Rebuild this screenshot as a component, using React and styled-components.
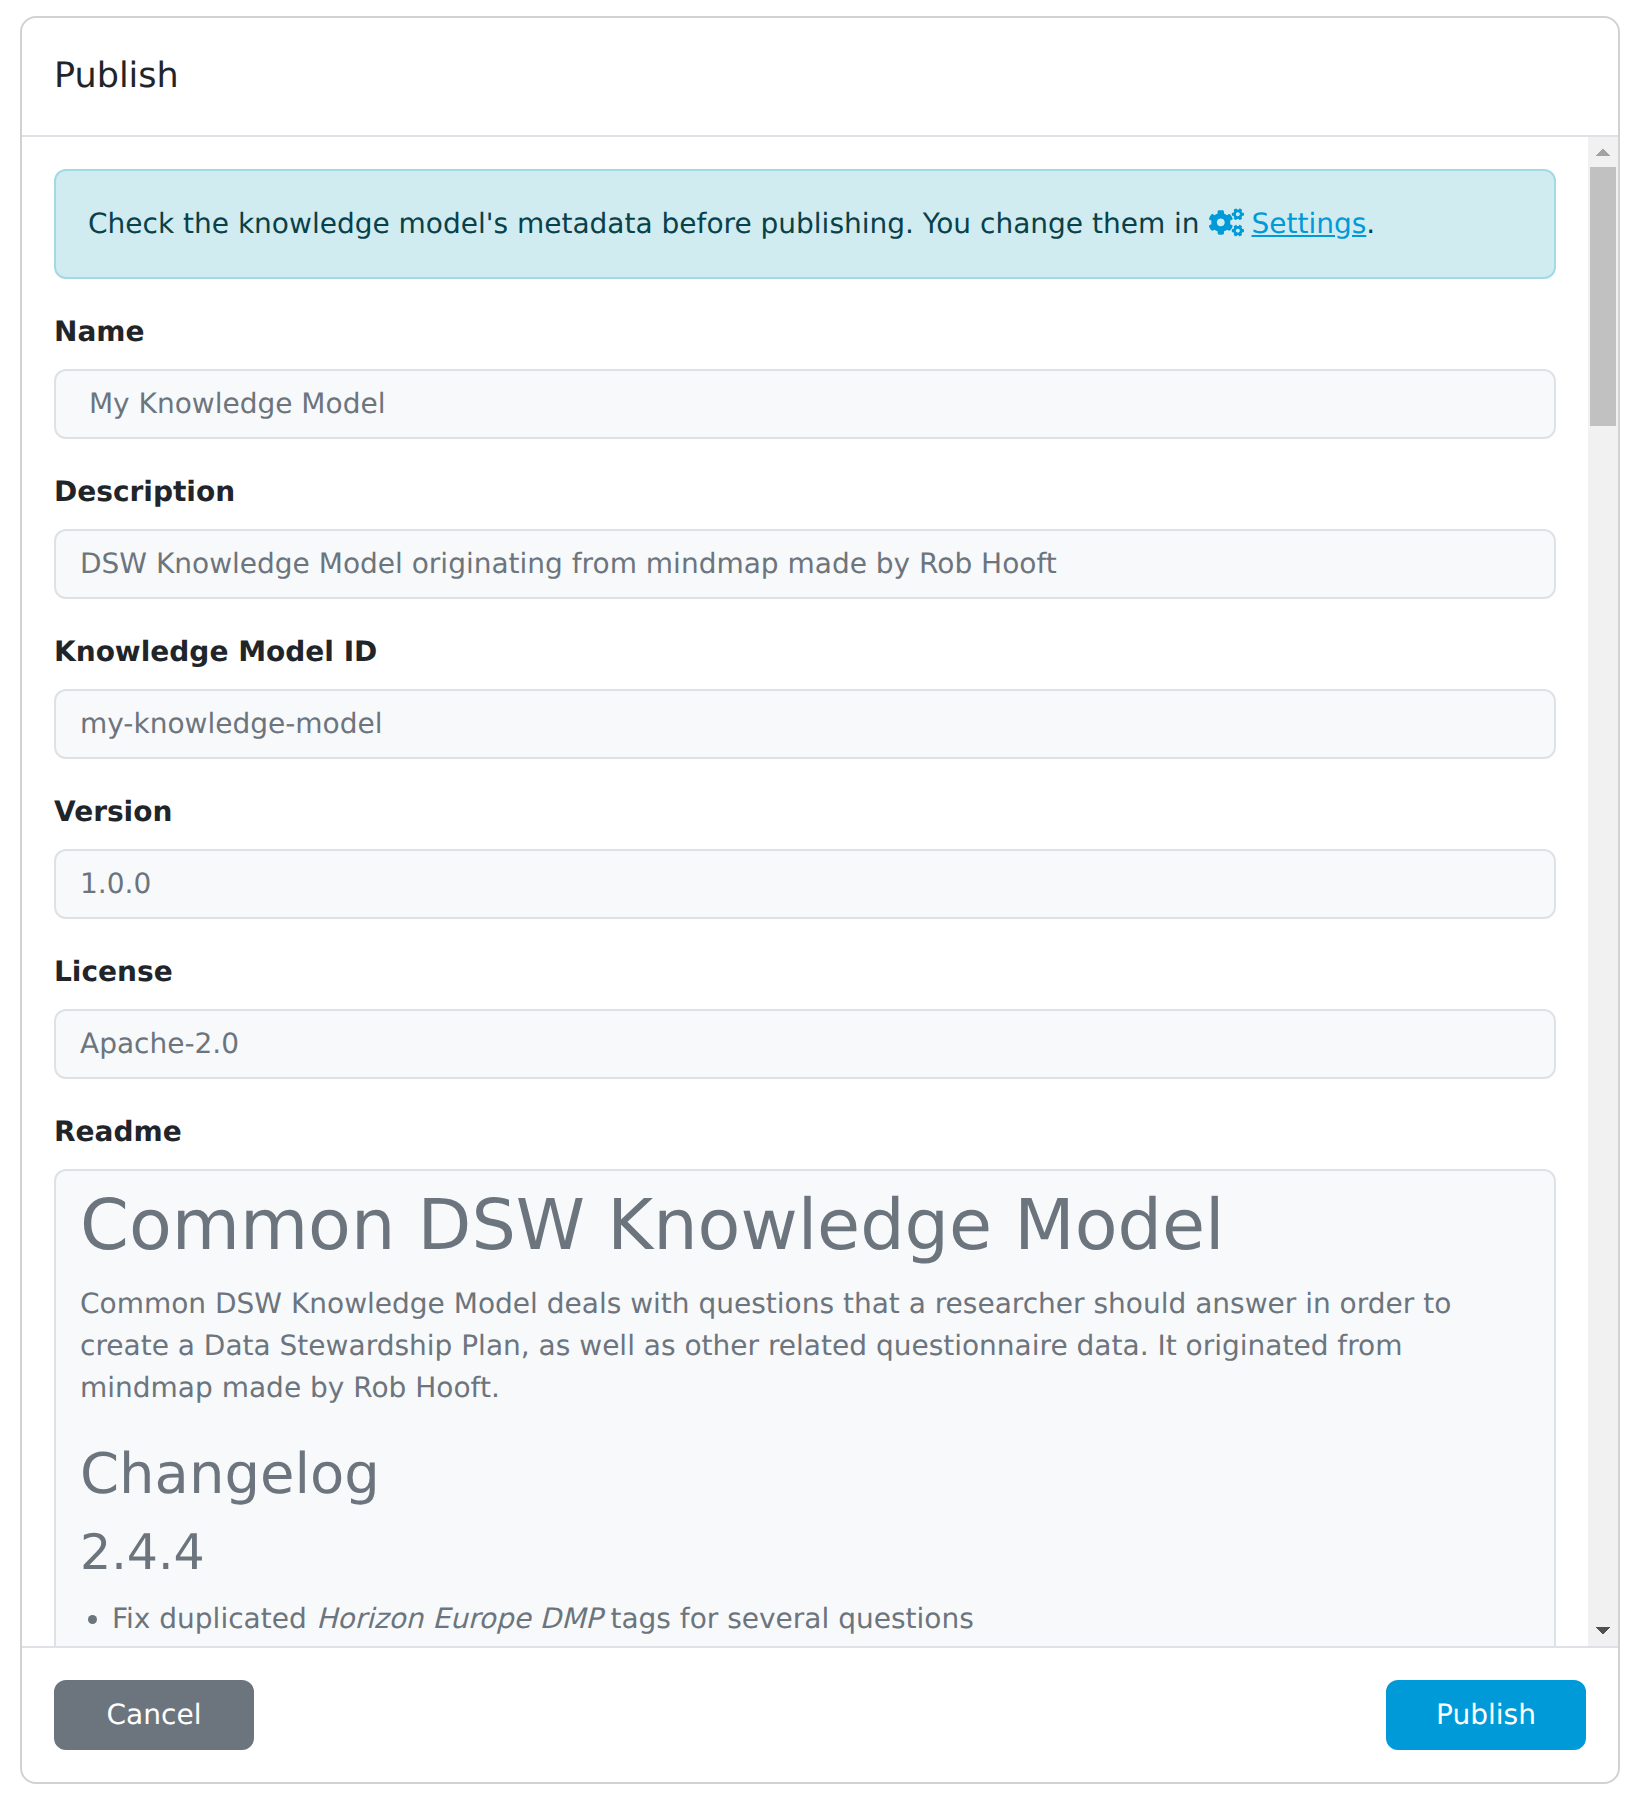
import React from 'react';
import styled, { createGlobalStyle } from 'styled-components';
import { FaCogs } from 'react-icons/fa';

const GlobalStyle = createGlobalStyle`
  *, *::before, *::after { box-sizing: border-box; }
  body {
    margin: 0;
    background: #fff;
    color: #212529;
    font-family: 'DejaVu Sans', sans-serif;
    font-size: 28px;
    line-height: 1.5;
    text-rendering: geometricPrecision;
  }
  h1, h2, h3, h5, p, ul { margin: 0; font-weight: 400; }
`;

const Page = styled.main`
  display: flex;
  height: 1808px;
  padding: 16px 20px 24px;
`;

const Dialog = styled.section`
  display: flex;
  flex: 1;
  flex-direction: column;
  min-width: 0;
  overflow: hidden;
  border: 2px solid #d2d2d2;
  border-radius: 16px;
  background: #fff;
`;

const DialogHeader = styled.header`
  flex: none;
  padding: 32px;
  border-bottom: 2px solid #dee2e6;
`;

const DialogTitle = styled.h5`
  font-size: 35px;
  line-height: 1.5;
`;

const DialogMain = styled.div`
  display: flex;
  flex: 1;
  min-height: 0;
`;

const DialogBody = styled.div`
  flex: 1;
  min-width: 0;
  overflow: hidden;
  padding: 32px;
`;

const Scrollbar = styled.div`
  display: flex;
  flex: none;
  flex-direction: column;
  width: 30px;
  background: #f1f1f1;
`;

const ScrollButton = styled.div`
  display: flex;
  flex: none;
  align-items: flex-start;
  justify-content: center;
  height: 30px;
  padding-top: ${({ $offset }) => $offset}px;
  color: ${({ $active }) => ($active ? '#505050' : '#a3a3a3')};
  svg { display: block; }
`;

const ScrollTrack = styled.div`
  flex: 1;
  padding: 0 2px;
`;

const ScrollThumb = styled.div`
  height: 259px;
  background: #c1c1c1;
`;

const Alert = styled.div`
  margin-bottom: 32px;
  padding: 32px;
  border: 2px solid #a2dae3;
  border-radius: 12px;
  background: #d1ecf1;
  color: #09414a;
`;

const SettingsIcon = styled(FaCogs)`
  width: 35px;
  height: 28px;
  margin-right: 8px;
  overflow: visible;
  color: #009ad9;
  vertical-align: -3px;
  transform: translateY(0.5px);
`;

const Link = styled.a`
  color: #009ad9;
  text-decoration: underline;
`;

const Group = styled.div`
  margin-bottom: 32px;
`;

const Label = styled.label`
  display: block;
  margin-bottom: 16px;
  font-weight: 700;
`;

const Value = styled.div`
  padding: 12px 24px;
  border: 2px solid #dee2e6;
  border-radius: 12px;
  background: #f8f9fb;
  color: #6c757d;
`;

const ReadmeValue = styled(Value)`
  min-height: 1200px;
`;

const Heading = styled.h1`
  margin-bottom: 16px;
  font-size: ${({ $size }) => $size}px;
  line-height: 1.2;
`;

const Paragraph = styled.p`
  && { margin-bottom: 32px; }
`;

const List = styled.ul`
  padding-left: 32px;
`;

const Emphasis = styled.em`
  display: inline-block;
  font-style: normal;
  transform: skewX(-14deg);
  transform-origin: 0 31px;
`;

const DialogFooter = styled.footer`
  display: flex;
  flex: none;
  justify-content: space-between;
  padding: 32px;
  border-top: 2px solid #dee2e6;
`;

const Button = styled.button`
  width: 200px;
  height: 70px;
  padding: 12px 24px;
  border: 2px solid ${({ $color }) => $color};
  border-radius: 12px;
  background: ${({ $color }) => $color};
  color: #fff;
  font: inherit;
  text-rendering: inherit;
`;

const fields = [
  { label: 'Name', value: '\u00a0My Knowledge Model' },
  { label: 'Description', value: 'DSW Knowledge Model originating from mindmap made by Rob Hooft' },
  { label: 'Knowledge Model ID', value: 'my-knowledge-model' },
  { label: 'Version', value: '1.0.0' },
  { label: 'License', value: 'Apache-2.0' },
];

export default function App() {
  return (
    <Page>
      <GlobalStyle />
      <Dialog>
        <DialogHeader>
          <DialogTitle>Publish</DialogTitle>
        </DialogHeader>
        <DialogMain>
          <DialogBody>
            <Alert>
              Check the knowledge model's metadata before publishing. You change them in{' '}
              <SettingsIcon />
              <Link>Settings</Link>.
            </Alert>
            {fields.map(({ label, value }) => (
              <Group key={label}>
                <Label>{label}</Label>
                <Value>{value}</Value>
              </Group>
            ))}
            <Group>
              <Label>Readme</Label>
              <ReadmeValue>
                <Heading $size={70}>Common DSW Knowledge Model</Heading>
                <Paragraph>
                  Common DSW Knowledge Model deals with questions that a researcher should answer in
                  order to create a Data Stewardship Plan, as well as other related questionnaire
                  data. It originated from mindmap made by Rob Hooft.
                </Paragraph>
                <Heading as="h2" $size={56}>Changelog</Heading>
                <Heading as="h3" $size={49}>2.4.4</Heading>
                <List>
                  <li>
                    Fix duplicated <Emphasis>Horizon Europe DMP</Emphasis> tags for several questions
                  </li>
                </List>
              </ReadmeValue>
            </Group>
          </DialogBody>
          <Scrollbar>
            <ScrollButton $offset={12}>
              <svg width="14" height="7" viewBox="0 0 14 7" fill="currentColor" shapeRendering="crispEdges">
                <path d="M-0.5 7L7 -0.5L14.5 7Z" />
              </svg>
            </ScrollButton>
            <ScrollTrack>
              <ScrollThumb />
            </ScrollTrack>
            <ScrollButton $offset={11} $active>
              <svg width="14" height="7" viewBox="0 0 14 7" fill="currentColor" shapeRendering="crispEdges">
                <path d="M-0.5 0L7 7.5L14.5 0Z" />
              </svg>
            </ScrollButton>
          </Scrollbar>
        </DialogMain>
        <DialogFooter>
          <Button type="button" $color="#6c757d">Cancel</Button>
          <Button type="button" $color="#009ad9">Publish</Button>
        </DialogFooter>
      </Dialog>
    </Page>
  );
}
